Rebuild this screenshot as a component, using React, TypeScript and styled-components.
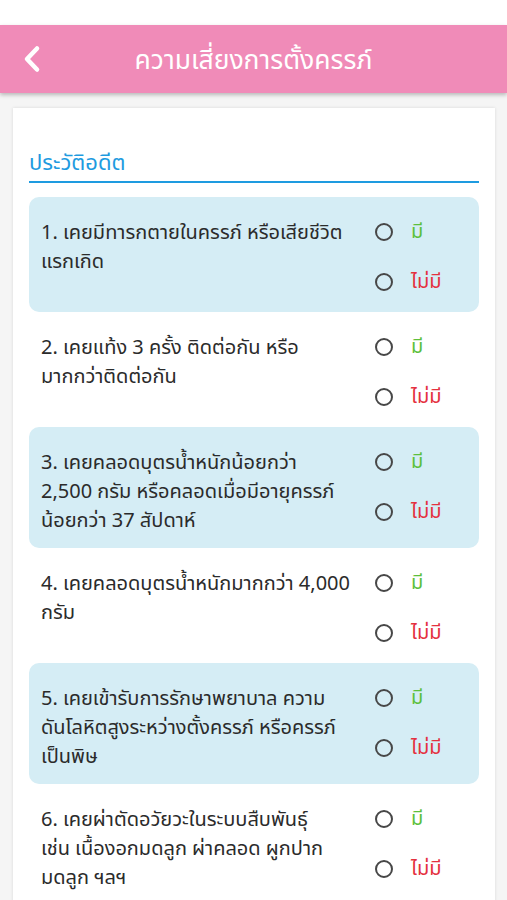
import styled, { createGlobalStyle } from 'styled-components';

const GlobalStyle = createGlobalStyle`
  html, body {
    margin: 0;
    padding: 0;
    background: #f5f5f5;
    font-family: "Noto Sans Thai", "Noto Sans", "DejaVu Sans", sans-serif;
  }
`;

const Page = styled.div`
  min-height: 900px;
  display: flex;
  flex-direction: column;
`;

const StatusBar = styled.div`
  height: 25px;
  background: #ffffff;
`;

const Header = styled.header`
  height: 68px;
  background: #f08bb8;
  display: flex;
  align-items: center;
  position: relative;
  box-shadow: 0 2px 4px rgba(0, 0, 0, 0.25);
  z-index: 1;
`;

const BackButton = styled.button`
  position: absolute;
  left: 20px;
  top: 50%;
  transform: translateY(-50%);
  background: none;
  border: none;
  padding: 0;
  display: flex;
  cursor: pointer;
`;

const Title = styled.h1`
  flex: 1;
  margin: 0;
  padding-top: 3px;
  text-align: center;
  color: #ffffff;
  font-size: 26.5px;
  font-weight: 400;
`;

const Body = styled.main`
  padding: 15px 12px 0 13px;
`;

const Card = styled.section`
  background: #ffffff;
  box-shadow: 0 0 3px rgba(0, 0, 0, 0.12);
  padding: 41px 16px 0 16px;
`;

const SectionTitle = styled.h2`
  margin: 0;
  font-size: 22px;
  line-height: 30px;
  font-weight: 400;
  color: #1e9be0;
  padding-bottom: 2px;
  border-bottom: 2px solid #1e9be0;
`;

const List = styled.div`
  display: flex;
  flex-direction: column;
  margin-top: 14px;
`;

const Item = styled.div<{ $shade: boolean }>`
  display: flex;
  align-items: flex-start;
  padding: 22px 11px 12px 12px;
  border-radius: 10px;
  background: ${(p) => (p.$shade ? '#d5edf5' : 'transparent')};
`;

const Question = styled.div`
  flex: 1;
  min-width: 0;
  font-size: 20px;
  line-height: 29px;
  color: #2b2b2b;
`;

const Line = styled.span`
  display: block;
  white-space: nowrap;
`;

const Options = styled.div`
  flex: 0 0 93px;
  display: flex;
  flex-direction: column;
  gap: 24px;
  padding-bottom: 5px;
`;

const Option = styled.label`
  height: 26px;
  display: flex;
  align-items: center;
  gap: 18px;
  cursor: pointer;
`;

const Radio = styled.span`
  flex: 0 0 auto;
  width: 14px;
  height: 14px;
  border-radius: 50%;
  border: 2.5px solid #474747;
`;

const OptionText = styled.span<{ $yes: boolean }>`
  font-size: 20px;
  color: ${(p) => (p.$yes ? '#5cbf3c' : '#e4313f')};
`;

const questions = [
  ['1. เคยมีทารกตายในครรภ์ หรือเสียชีวิต', 'แรกเกิด'],
  ['2. เคยแท้ง 3 ครั้ง ติดต่อกัน หรือ', 'มากกว่าติดต่อกัน'],
  ['3. เคยคลอดบุตรน้ำหนักน้อยกว่า', '2,500 กรัม หรือคลอดเมื่อมีอายุครรภ์', 'น้อยกว่า 37 สัปดาห์'],
  ['4. เคยคลอดบุตรน้ำหนักมากกว่า 4,000', 'กรัม'],
  ['5. เคยเข้ารับการรักษาพยาบาล ความ', 'ดันโลหิตสูงระหว่างตั้งครรภ์ หรือครรภ์', 'เป็นพิษ'],
  ['6. เคยผ่าตัดอวัยวะในระบบสืบพันธุ์', 'เช่น เนื้องอกมดลูก ผ่าคลอด ผูกปาก', 'มดลูก ฯลฯ'],
];

export default function App() {
  return (
    <Page>
      <GlobalStyle />
      <StatusBar />
      <Header>
        <BackButton aria-label="back">
          <svg width="24" height="28" viewBox="0 0 24 28">
            <path
              d="M17 3.5 L7 14 L17 24.5"
              fill="none"
              stroke="#ffffff"
              strokeWidth="4.5"
              strokeLinecap="round"
              strokeLinejoin="round"
            />
          </svg>
        </BackButton>
        <Title>ความเสี่ยงการตั้งครรภ์</Title>
      </Header>
      <Body>
        <Card>
          <SectionTitle>ประวัติอดีต</SectionTitle>
          <List>
            {questions.map((lines, i) => (
              <Item key={i} $shade={i % 2 === 0}>
                <Question>
                  {lines.map((l) => (
                    <Line key={l}>{l}</Line>
                  ))}
                </Question>
                <Options>
                  <Option>
                    <Radio />
                    <OptionText $yes>มี</OptionText>
                  </Option>
                  <Option>
                    <Radio />
                    <OptionText $yes={false}>ไม่มี</OptionText>
                  </Option>
                </Options>
              </Item>
            ))}
          </List>
        </Card>
      </Body>
    </Page>
  );
}
